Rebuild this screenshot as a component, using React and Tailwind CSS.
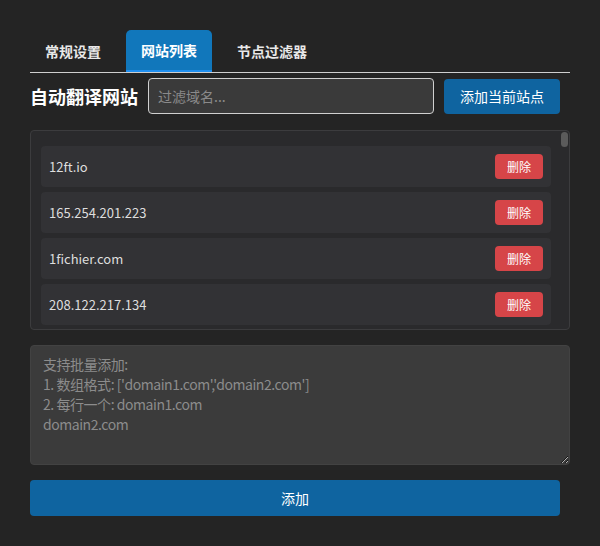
import React from "react";

const domains = ["12ft.io", "165.254.201.223", "1fichier.com", "208.122.217.134"];

const font = { fontFamily: '"Noto Sans CJK SC", "Noto Sans", sans-serif' };

export default function App() {
  return (
    <div className="min-h-[546px] w-[600px] bg-[#242424] px-[30px] pt-[30px] text-[#e6e6e6]" style={font}>
      <div className="flex gap-[10px] border-b border-[#cfcfcf]">
        <button className="h-[42px] w-[86px] rounded-t-[5px] text-[14px] font-bold text-[#e8e8e8]">常规设置</button>
        <button className="h-[42px] w-[86px] rounded-t-[5px] border-b-2 border-[#1f8ff0] bg-[#1177bb] text-[14px] font-bold text-white">网站列表</button>
        <button className="h-[42px] px-[15px] rounded-t-[5px] text-[14px] font-bold text-[#e8e8e8]">节点过滤器</button>
      </div>

      <div className="mt-[5px] flex h-[36px] items-center gap-[10px] pr-[10px]">
        <h2 className="text-[18px] font-bold leading-none text-white">自动翻译网站</h2>
        <input
          className="h-[36px] flex-1 rounded-[4px] border border-[#d0d0d0] bg-[#3a3a3a] px-[9px] text-[14px] text-white outline-none placeholder:text-[#8a8a8a]"
          placeholder="过滤域名..."
        />
        <button className="h-[35px] w-[116px] rounded-[4px] bg-[#0f64a0] text-[14px] text-white">添加当前站点</button>
      </div>

      <div className="relative mt-[16px] h-[200px] overflow-hidden rounded-[4px] border border-[#3c3c3e] bg-[#2a2a2c] pb-[4px] pl-[10px] pr-[18px] pt-[15px]">
        <ul className="flex flex-col gap-[5px]">
          {domains.map((d) => (
            <li key={d} className="flex h-[41px] items-center justify-between rounded-[4px] bg-[#323235] pl-[8px] pr-[8px]">
              <span className="text-[13px] text-[#dedede]">{d}</span>
              <button className="h-[25px] w-[48px] rounded-[4px] bg-[#d64548] text-[12px] text-white">删除</button>
            </li>
          ))}
        </ul>
        <div className="absolute right-[1px] top-[1px] h-[15px] w-[7px] rounded-[4px] bg-[#5b5b5b]" />
      </div>

      <textarea
        className="mt-[15px] block h-[120px] w-full resize-y rounded-[4px] border border-[#424242] bg-[#3b3b3b] px-[12px] py-[8px] text-[14px] leading-[20px] tracking-[-0.45px] text-white outline-none placeholder:text-[#8c8c8c]"
        placeholder={"支持批量添加:\n1. 数组格式: ['domain1.com','domain2.com']\n2. 每行一个: domain1.com\ndomain2.com"}
      />

      <button className="mt-[15px] h-[36px] w-[530px] rounded-[4px] bg-[#0f64a0] text-[14px] text-white">添加</button>
    </div>
  );
}
